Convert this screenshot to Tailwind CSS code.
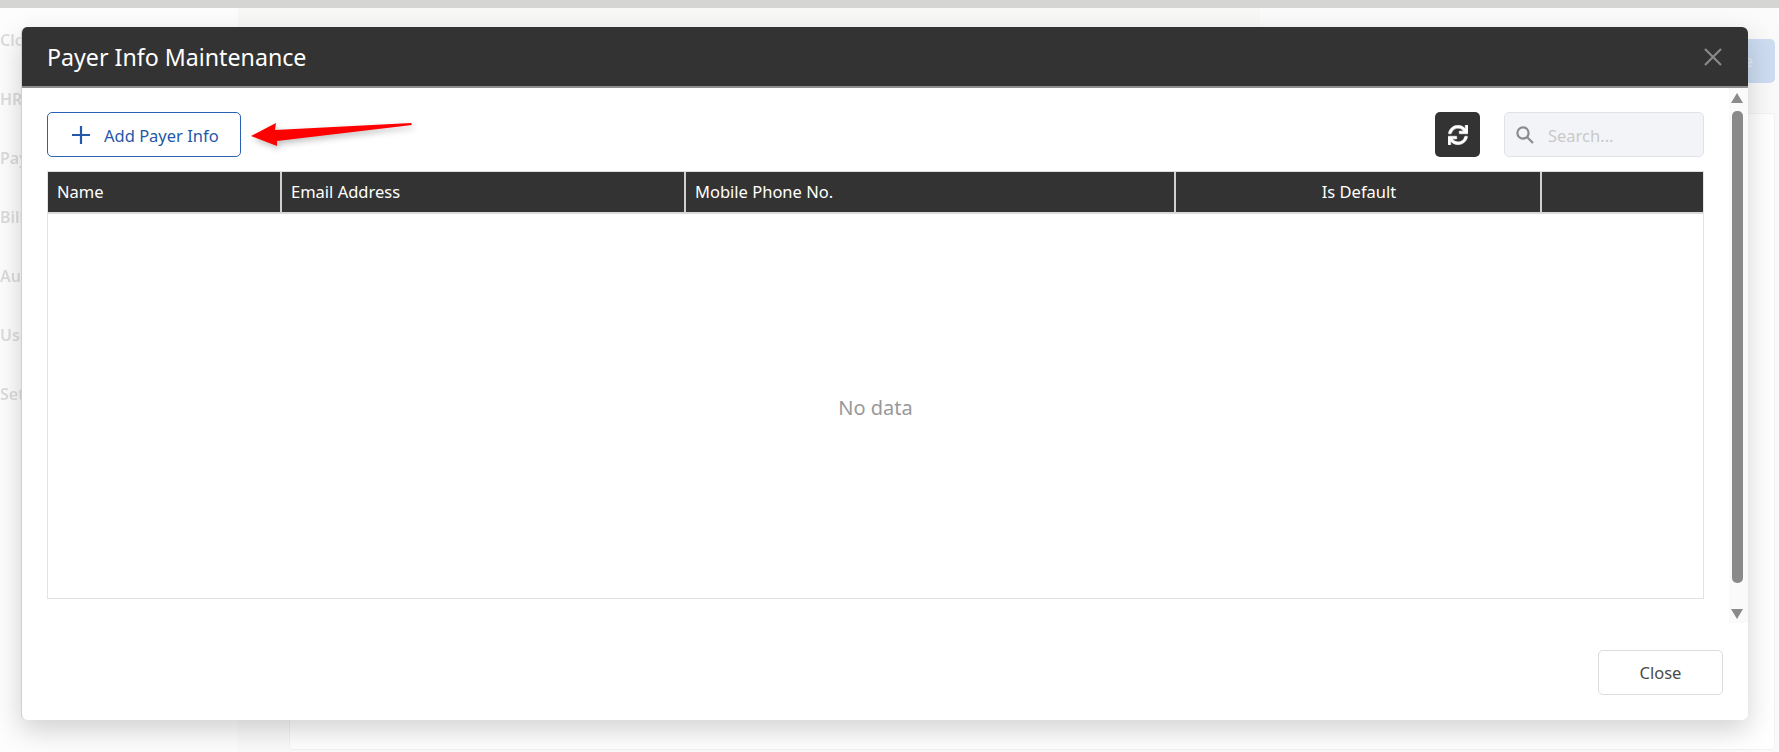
<!doctype html>
<html>
<head>
<meta charset="utf-8">
<script src="https://cdn.jsdelivr.net/npm/@tailwindcss/browser@4"></script>
</head>
<body class="bg-[#fefefe] font-['Noto_Sans','Open_Sans',sans-serif] overflow-hidden">
<div class="relative w-[1779px] h-[752px] overflow-hidden flex flex-col">
  <div class="h-2 bg-[#d5d6d4] shrink-0"></div>
  <div class="flex flex-1 min-h-0">
    <aside class="w-[238px] shrink-0 bg-[#fdfdfd] pt-[20px] flex flex-col gap-[35px] text-[#dcdcdc] text-[16px] font-semibold leading-[24px] blur-[0.6px]">
      <span>Cloud</span><span>HR</span><span>Pay</span><span>Billing</span><span>Auto</span><span>User</span><span>Settings</span>
    </aside>
    <main class="flex-1 bg-[#fafafa] flex flex-col">
      <div class="h-[17px] shrink-0 bg-[#fbfbfb]"><div class="w-[1022px] h-full bg-[#f8f9f6]"></div></div>
      <div class="flex-1 min-h-0 flex flex-col pl-[51px] pr-[4px] pb-[2px]">
        <div class="h-[14px] shrink-0"></div>
        <div class="flex justify-end h-[44px] shrink-0">
          <div class="w-[120px] rounded-[5px] bg-[#cddcf1] flex items-center justify-end pr-[22px] text-[#e6edf7] text-[16px]">Save</div>
        </div>
        <div class="h-[30px] shrink-0"></div>
        <div class="flex-1 bg-white border border-[#f2f2f2] rounded-[4px]"></div>
      </div>
    </main>
  </div>

  <div class="absolute left-[21px] top-[27px] w-[1727px] h-[693px] bg-white rounded-[6px] flex flex-col overflow-hidden shadow-[0_10px_28px_rgba(0,0,0,0.18)] border-l border-[#d0d0d0]">
    <header class="h-[61px] bg-[#333333] border-b-2 border-[#8f8f8f] shrink-0 flex items-center justify-between pl-[25px] pr-[25px]">
      <h1 class="text-white text-[23.2px] leading-[30px]">Payer Info Maintenance</h1>
      <svg class="w-[20px] h-[20px] text-[#8a8a8a]" viewBox="0 0 20 20" fill="none" stroke="currentColor" stroke-width="2.2"><path d="M2 2 18 18M18 2 2 18"/></svg>
    </header>
    <div class="flex-1 flex min-h-0">
      <div class="flex-1 min-w-0 pl-[25px] pr-[25px] pt-[24px] flex flex-col">
        <div class="flex items-center h-[45px] shrink-0">
          <button class="w-[194px] h-[45px] border border-[#2a62b5] rounded-[5px] flex items-center justify-start pl-[24px] gap-[14px] text-[#2458a8] text-[16.5px]">
            <svg class="w-[18px] h-[18px]" viewBox="0 0 18 18" fill="none" stroke="currentColor" stroke-width="2.2"><path d="M9 0v18M0 9h18"/></svg>
            <span class="pt-[3px]">Add Payer Info</span>
          </button>
          <div class="ml-auto w-[45px] h-[45px] bg-[#333333] rounded-[5px] flex items-center justify-center">
            <svg class="w-[20px] h-[20px] text-white" viewBox="0 0 512 512" fill="currentColor" stroke="currentColor" stroke-width="14"><path d="M440.65 12.57l4 82.77A247.16 247.16 0 0 0 255.83 8C134.73 8 33.91 94.92 12.29 209.82A12 12 0 0 0 24.09 224h49.05a12 12 0 0 0 11.67-9.26 175.91 175.91 0 0 1 317-56.94l-101.46-4.86a12 12 0 0 0-12.57 12v47.41a12 12 0 0 0 12 12H500a12 12 0 0 0 12-12V12a12 12 0 0 0-12-12h-47.37a12 12 0 0 0-11.98 12.57zM255.83 432a175.61 175.61 0 0 1-146-77.8l101.8 4.87a12 12 0 0 0 12.57-12v-47.4a12 12 0 0 0-12-12H12a12 12 0 0 0-12 12V500a12 12 0 0 0 12 12h47.35a12 12 0 0 0 12-12.6l-4.15-82.57A247.17 247.17 0 0 0 255.83 504c121.11 0 221.93-86.92 243.55-201.82a12 12 0 0 0-11.8-14.18h-49.05a12 12 0 0 0-11.67 9.26A175.86 175.86 0 0 1 255.83 432z"/></svg>
          </div>
          <div class="ml-[24px] w-[200px] h-[45px] bg-[#f3f4f8] border border-[#e0e2e6] rounded-[5px] flex items-center pl-[11px] gap-[14px]">
            <svg class="w-[18px] h-[18px] text-[#8c8c8c]" viewBox="0 0 18 18" fill="none" stroke="currentColor" stroke-width="2.2"><circle cx="7" cy="7" r="5.6"/><path d="M11 11l6 6"/></svg>
            <span class="text-[#c9c9c9] text-[16.5px] pt-[3px]">Search...</span>
          </div>
        </div>
        <div class="mt-[14px] h-[428px] shrink-0 border border-[#e3e3e3] border-t-0 flex flex-col">
          <div class="h-[43px] shrink-0 bg-[#333333] grid grid-cols-[234px_404px_490px_366px_1fr] text-white text-[16.5px] border-t-[1px] border-b-2 border-t-[#e0e0e0] border-b-[#d9d9d9]">
            <div class="flex items-center pl-[9px] border-r-2 border-[#d0d0d0]">Name</div>
            <div class="flex items-center pl-[9px] border-r-2 border-[#d0d0d0]">Email Address</div>
            <div class="flex items-center pl-[9px] border-r-2 border-[#d0d0d0]">Mobile Phone No.</div>
            <div class="flex items-center justify-center pl-[2px] border-r-2 border-[#d0d0d0]">Is Default</div>
            <div></div>
          </div>
          <div class="flex-1 flex items-center justify-center text-[#999999] text-[20px] pt-[3px]">No data</div>
        </div>
        <div class="mt-auto mb-[25px] flex justify-end">
          <button class="w-[125px] h-[45px] mr-[-19px] border border-[#dcdcdc] rounded-[5px] text-[#4a4a4a] text-[16.5px] pt-[2px]">Close</button>
        </div>
      </div>
      <div class="w-[19px] shrink-0 self-start h-[535px] bg-[#fafafa] flex flex-col items-center pt-[5px] pr-[3px]">
        <svg class="w-[12px] h-[10px] text-[#8a8a8a] shrink-0" viewBox="0 0 12 10" fill="currentColor"><path d="M6 0l6 10H0z"/></svg>
        <div class="w-[11px] h-[472px] mt-[8px] rounded-[5px] bg-[#8a8a8a] shrink-0"></div>
        <svg class="w-[12px] h-[10px] mt-[26px] text-[#8a8a8a] shrink-0" viewBox="0 0 12 10" fill="currentColor"><path d="M0 0h12L6 10z"/></svg>
      </div>
    </div>
  </div>

  <svg class="absolute left-[245px] top-[115px] w-[175px] h-[40px] drop-shadow-[2px_3px_3px_rgba(0,0,0,0.25)]" viewBox="245 115 175 40"><path fill="#ff0000" d="M251 136 276 123 275 130 411 123 412 125 277 141 277 146z"/></svg>
</div>
</body>
</html>
